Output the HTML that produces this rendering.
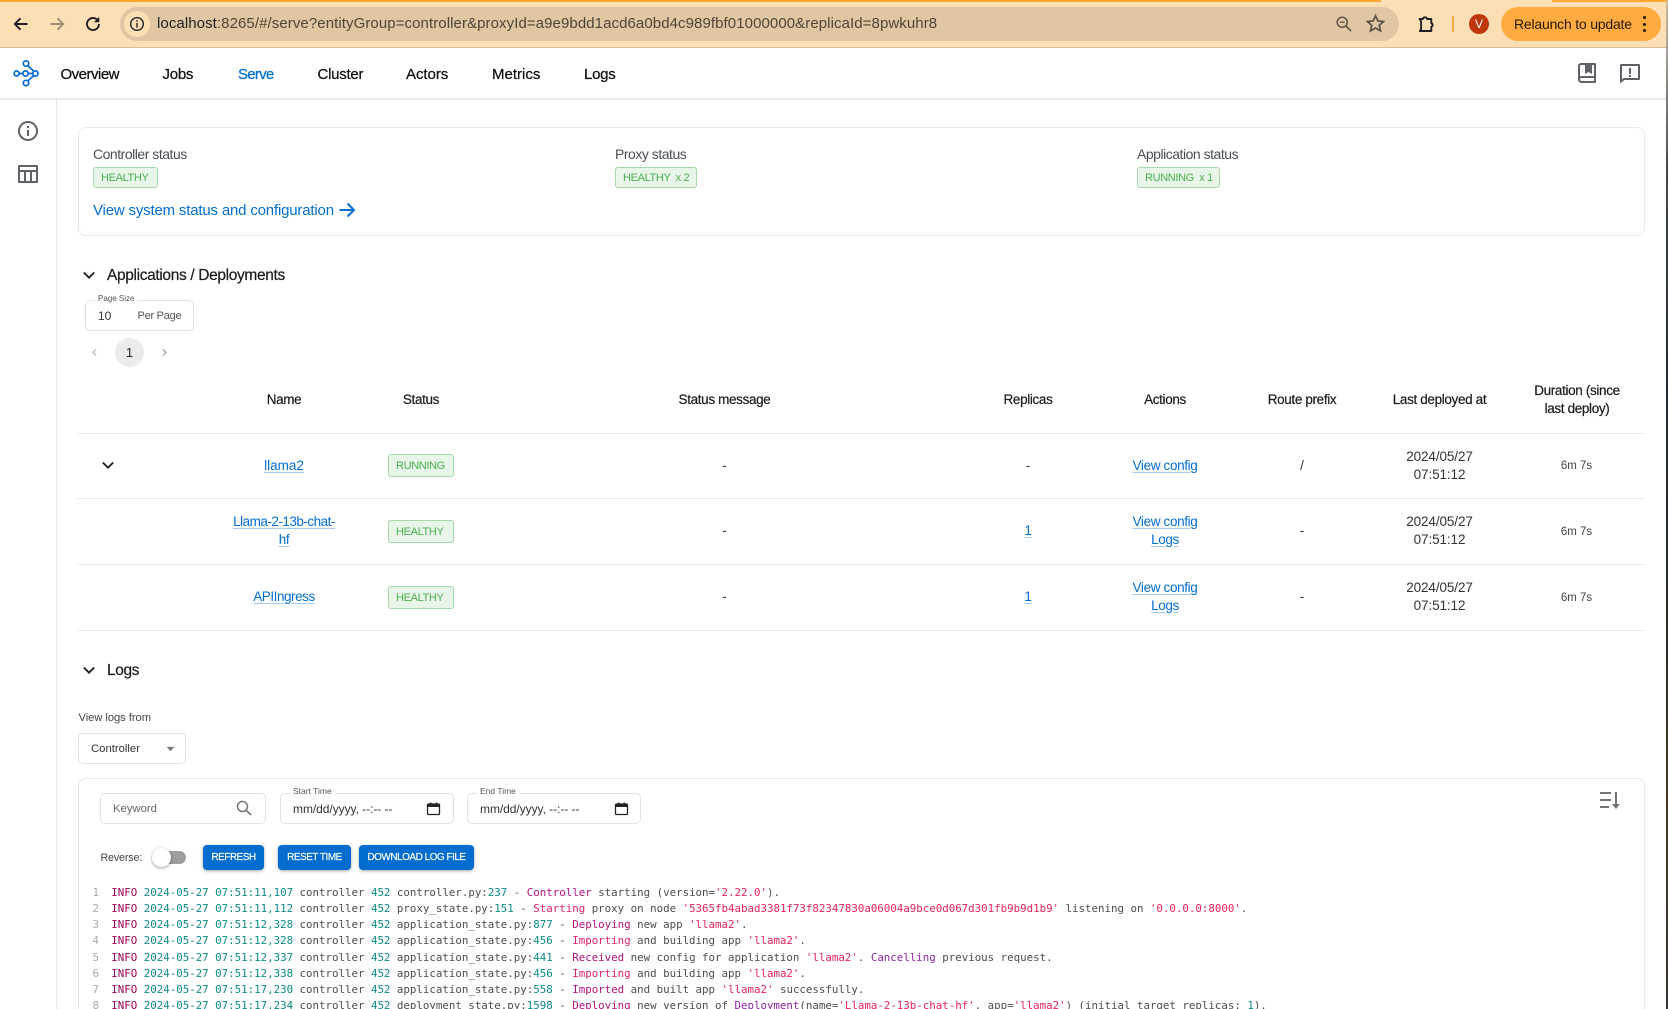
<!DOCTYPE html>
<html lang="en">
<head>
<meta charset="utf-8">
<title>Ray Dashboard - Serve</title>
<style>
html,body{margin:0;padding:0;background:#fff}
#r{position:relative;width:1668px;height:1009px;overflow:hidden;background:#fff;font-family:"Liberation Sans",Arial,sans-serif;color:#1f2328}
.t{position:absolute;white-space:nowrap;line-height:20px;height:20px}
.c{transform:translateX(-50%);text-align:center}
.b{position:absolute;box-sizing:border-box}
svg{position:absolute;display:block}
.nav{font-size:15px;letter-spacing:-.25px;color:#111;top:64.5px;-webkit-text-stroke:.25px currentColor}
.lbl{font-size:14px;letter-spacing:-.48px;color:#4a4f55;top:144px}
.badge{position:absolute;box-sizing:border-box;background:#e8f5e9;border:1px solid #a6d8a9;border-radius:3px;color:#4caf50;font-size:11px;line-height:20px;padding-left:7px;white-space:pre;letter-spacing:-.35px}
.th{font-size:13.5px;letter-spacing:-.35px;color:#1a1a1a;-webkit-text-stroke:.2px currentColor}
.td{font-size:13.5px;color:#333;letter-spacing:-.1px}
.a{font-size:13.5px;color:#036dcf;letter-spacing:-.35px;text-decoration:underline;text-decoration-color:rgba(3,109,207,.35);text-underline-offset:2px}
.d{font-size:11.5px;color:#444;margin-top:.5px}
.line{position:absolute;left:78px;width:1567px;height:1px;background:#e8eaed}
.box{position:absolute;box-sizing:border-box;border:1px solid #dfe2e6;border-radius:5px;background:#fff}
.small{font-size:8px;color:#555;line-height:10px;height:10px;background:#fff;padding:0 3px}
.btn{position:absolute;top:845px;height:25px;background:#036dcf;border-radius:4px;color:#fff;font-size:10px;letter-spacing:-.5px;line-height:26px;text-align:center;white-space:nowrap;box-shadow:0 1px 3px rgba(0,0,0,.35);-webkit-text-stroke:.15px #fff}
#log{position:absolute;left:0;top:884.5px;font-family:"DejaVu Sans Mono",monospace;font-size:10.79px;line-height:16.25px;color:#4d4d4d}
#log div{position:relative;padding-left:111.3px;height:16.25px;white-space:pre}
#log i{position:absolute;left:80px;width:19px;text-align:right;font-style:normal;color:#aaa}
.k{color:#990055}.n{color:#0b8a86}.m{color:#b3127f}.p{color:#e0226e}.s{color:#e6235a}.u{color:#8e24aa}
.hd{font-size:15.5px;letter-spacing:-.35px;color:#1a1a1a;-webkit-text-stroke:.2px currentColor}
.date{font-size:12px;letter-spacing:-.05px;color:#333;top:799px}
.lg{font-size:8.5px;color:#555;line-height:10px;height:10px;background:#fff;padding:0 3px;position:absolute;white-space:nowrap;top:786px}
</style>
</head>
<body>
<div id="r">

<!-- browser chrome -->
<div class="b" style="left:0;top:0;width:1668px;height:48px;background:#fddfb6;border-bottom:1px solid #d9bd98"></div>
<div class="b" style="left:0;top:0;width:1381px;height:1.5px;background:#ffa733"></div>
<div class="b" style="left:1552px;top:0;width:116px;height:1.5px;background:#ffa733"></div>

<svg style="left:11px;top:14px" width="20" height="20" viewBox="0 0 20 20"><path d="M16.5 10H4M9.5 4.3 3.8 10l5.7 5.7" fill="none" stroke="#202124" stroke-width="1.9"/></svg>
<svg style="left:47px;top:14px" width="20" height="20" viewBox="0 0 20 20"><path d="M3.5 10H16M10.5 4.3 16.2 10l-5.7 5.7" fill="none" stroke="#9a8c78" stroke-width="1.9"/></svg>
<svg style="left:83px;top:14px" width="20" height="20" viewBox="0 0 20 20"><path d="M15.3 7.2A6 6 0 1 0 16 10" fill="none" stroke="#202124" stroke-width="1.9"/><path d="M16.3 2.8v5.4h-5.4z" fill="#202124"/></svg>

<div class="b" style="left:120px;top:7px;width:1279px;height:34px;border-radius:17px;background:#e0c6a3"></div>
<div class="b" style="left:124px;top:11px;width:26px;height:26px;border-radius:13px;background:#fddfb6"></div>
<svg style="left:129px;top:16px" width="16" height="16" viewBox="0 0 16 16"><circle cx="8" cy="8" r="6.3" fill="none" stroke="#202124" stroke-width="1.4"/><path d="M7.3 4.2h1.4v1.500H7.3zM7.3 7h1.4v4.8H7.3z" fill="#202124"/></svg>
<div class="t" style="left:157px;top:14px;font-size:15px;letter-spacing:.08px;color:#4f4636"><span style="color:#1f1f1f">localhost</span>:8265/#/serve?entityGroup=controller&amp;proxyId=a9e9bdd1acd6a0bd4c989fbf01000000&amp;replicaId=8pwkuhr8</div>

<svg style="left:1335px;top:15px" width="18" height="18" viewBox="0 0 18 18"><circle cx="7.2" cy="7.2" r="5" fill="none" stroke="#5b5346" stroke-width="1.5"/><path d="M11 11l5 5" stroke="#5b5346" stroke-width="1.6"/><path d="M4.800 7.200h4.800" stroke="#5b5346" stroke-width="1.3"/></svg>
<svg style="left:1365px;top:13px" width="21" height="21" viewBox="0 0 24 24"><path d="M12 3.2l2.7 5.9 6.4.7-4.8 4.3 1.4 6.3L12 17.100l-5.700 3.300 1.400-6.300-4.800-4.300 6.400-.7z" fill="none" stroke="#5b5346" stroke-width="2"/></svg>
<svg style="left:1416px;top:14px" width="20" height="20" viewBox="0 0 20 20"><path d="M3.600 5h3.200a2.200 2.200 0 0 1 4.300 0h4.200v4.200a1.900 1.900 0 0 1 0 3.600V17H3.900l1.200-2.100V7.500z" fill="none" stroke="#202124" stroke-width="1.9" stroke-linejoin="round"/></svg>
<div class="b" style="left:1452px;top:16px;width:2px;height:16px;background:#ffab40"></div>
<div class="b" style="left:1469px;top:14px;width:20px;height:20px;border-radius:10px;background:#bf360c"></div>
<div class="t c" style="left:1479px;top:14px;font-size:12px;color:#fff">V</div>
<div class="b" style="left:1501px;top:7px;width:160px;height:34px;border-radius:17px;background:#ffab40"></div>
<div class="t" style="left:1514px;top:14px;font-size:14px;letter-spacing:-.2px;color:#241a0a">Relaunch to update</div>
<div class="b" style="left:1643px;top:16px;width:3.400px;height:3.400px;border-radius:2px;background:#241a0a"></div>
<div class="b" style="left:1643px;top:22.500px;width:3.400px;height:3.400px;border-radius:2px;background:#241a0a"></div>
<div class="b" style="left:1643px;top:29px;width:3.400px;height:3.400px;border-radius:2px;background:#241a0a"></div>

<!-- right window edge -->
<div class="b" style="left:1666px;top:0;width:2px;height:1009px;background:linear-gradient(#cdbb9c 0,#9b9b98 60px,#4a4a4a 170px,#1b2733 400px,#2a2b24 640px,#4a3a20 800px,#333 1009px)"></div>

<!-- app nav -->
<div class="b" style="left:0;top:98px;width:1666px;height:2px;background:#e4e8ed"></div>
<svg style="left:12px;top:58px" width="28" height="30" viewBox="0 0 28 30"><g fill="none" stroke="#036dcf" stroke-width="1.7"><circle cx="14" cy="5.500" r="2.700"/><circle cx="4.600" cy="15.500" r="2.500"/><circle cx="13.500" cy="15.500" r="2.600"/><circle cx="23.400" cy="15.500" r="2.600"/><circle cx="14" cy="25" r="2.700"/><path d="M7 15.500h4M16.100 15.500h4.700M15.700 7.700l6.200 5.600M15.700 23l6.200-5.500"/></g></svg>

<div class="t nav" style="left:60.500px;letter-spacing:-.5px">Overview</div>
<div class="t nav" style="left:162.500px">Jobs</div>
<div class="t nav" style="left:238px;color:#036dcf;letter-spacing:-.75px">Serve</div>
<div class="t nav" style="left:317.500px">Cluster</div>
<div class="t nav" style="left:406px;letter-spacing:-.05px">Actors</div>
<div class="t nav" style="left:492px;letter-spacing:0">Metrics</div>
<div class="t nav" style="left:584px">Logs</div>

<svg style="left:1575px;top:61px" width="24" height="24" viewBox="0 0 24 24"><path fill="#5f6369" d="M20 22H6.500C4.567 22 3 20.433 3 18.500V5C3 3.343 4.343 2 6 2H20C20.552 2 21 2.448 21 3V21C21 21.552 20.552 22 20 22ZM19 20V17H6.500C5.672 17 5 17.672 5 18.500C5 19.328 5.672 20 6.500 20H19ZM10 4H6C5.448 4 5 4.448 5 5V15.337C5.455 15.121 5.963 15 6.500 15H19V4H17V13L13.500 11L10 13V4Z"/></svg>
<svg style="left:1618px;top:61px" width="24" height="24" viewBox="0 0 24 24"><path fill="#5f6369" d="M6.455 19L2 22.500V4C2 3.448 2.448 3 3 3H21C21.552 3 22 3.448 22 4V18C22 18.552 21.552 19 21 19H6.455ZM5.763 17H20V5H4V18.385L5.763 17ZM11 14H13V16H11V14ZM11 7H13V13H11V7Z"/></svg>

<!-- sidebar -->
<div class="b" style="left:56px;top:100px;width:1px;height:909px;background:#e4e8ed"></div>
<svg style="left:16px;top:119px" width="24" height="24" viewBox="0 0 24 24"><path fill="#5f6369" d="M12 22C6.477 22 2 17.523 2 12C2 6.477 6.477 2 12 2C17.523 2 22 6.477 22 12C22 17.523 17.523 22 12 22ZM12 20C16.418 20 20 16.418 20 12C20 7.582 16.418 4 12 4C7.582 4 4 7.582 4 12C4 16.418 7.582 20 12 20ZM11 7H13V9H11V7ZM11 11H13V17H11V11Z"/></svg>
<svg style="left:16px;top:162px" width="24" height="24" viewBox="0 0 24 24"><path fill="#5f6369" fill-rule="evenodd" d="M4 8H20V5H4V8ZM14 19V10H10V19H14ZM16 19H20V10H16V19ZM8 19V10H4V19H8ZM3 3H21C21.552 3 22 3.448 22 4V20C22 20.552 21.552 21 21 21H3C2.448 21 2 20.552 2 20V4C2 3.448 2.448 3 3 3Z"/></svg>

<!-- status card -->
<div class="b" style="left:78px;top:127px;width:1567px;height:109px;border:1px solid #e6e9ed;border-radius:8px"></div>
<div class="t lbl" style="left:93px">Controller status</div>
<div class="badge" style="left:93px;top:167px;width:65px;height:21px">HEALTHY</div>
<div class="t lbl" style="left:615px">Proxy status</div>
<div class="badge" style="left:615px;top:167px;width:82px;height:21px">HEALTHY  x 2</div>
<div class="t lbl" style="left:1137px">Application status</div>
<div class="badge" style="left:1137px;top:167px;width:83px;height:21px">RUNNING  x 1</div>
<div class="t" style="left:93px;top:200.500px;font-size:15px;letter-spacing:-.18px;color:#036dcf">View system status and configuration</div>
<svg style="left:337px;top:200px" width="20" height="20" viewBox="0 0 20 20"><path d="M2.500 10H16.500M10.500 3.500l6.500 6.500-6.500 6.500" fill="none" stroke="#036dcf" stroke-width="2"/></svg>

<!-- applications section -->
<svg style="left:80px;top:266px" width="18" height="18" viewBox="0 0 18 18"><path d="M3.800 6.500 9 11.700l5.200-5.200" fill="none" stroke="#222" stroke-width="1.900"/></svg>
<div class="t hd" style="left:107px;top:265.500px">Applications / Deployments</div>

<div class="box" style="left:85px;top:300px;width:109px;height:31px"></div>
<div class="t small" style="left:95px;top:293.500px">Page Size</div>
<div class="t" style="left:98px;top:305.500px;font-size:12px;color:#333">10</div>
<div class="t" style="left:137.500px;top:305.500px;font-size:11px;letter-spacing:-.25px;color:#555">Per Page</div>

<svg style="left:89px;top:347px" width="11" height="11" viewBox="0 0 12 12"><path d="M7.800 2.500 4.300 6l3.500 3.500" fill="none" stroke="#b5b5b5" stroke-width="1.200"/></svg>
<div class="b" style="left:115px;top:338px;width:29px;height:29px;border-radius:50%;background:#ebebeb"></div>
<div class="t c" style="left:129.500px;top:342.500px;font-size:13px;color:#222">1</div>
<svg style="left:158.500px;top:347px" width="11" height="11" viewBox="0 0 12 12"><path d="M4.200 2.500 7.700 6 4.200 9.500" fill="none" stroke="#999" stroke-width="1.200"/></svg>

<!-- table -->
<div class="t c th" style="left:284px;top:390px">Name</div>
<div class="t c th" style="left:421px;top:390px">Status</div>
<div class="t c th" style="left:724.500px;top:390px">Status message</div>
<div class="t c th" style="left:1028px;top:390px">Replicas</div>
<div class="t c th" style="left:1165px;top:390px">Actions</div>
<div class="t c th" style="left:1302px;top:390px">Route prefix</div>
<div class="t c th" style="left:1439.500px;top:390px">Last deployed at</div>
<div class="t c th" style="left:1577px;top:381px">Duration (since</div>
<div class="t c th" style="left:1577px;top:399px">last deploy)</div>

<div class="line" style="top:433px"></div>
<div class="line" style="top:498px"></div>
<div class="line" style="top:564px"></div>
<div class="line" style="top:630px"></div>

<!-- row 1 -->
<svg style="left:99px;top:456px" width="18" height="18" viewBox="0 0 18 18"><path d="M3.800 6.500 9 11.700l5.200-5.200" fill="none" stroke="#222" stroke-width="1.900"/></svg>
<div class="t c a" style="left:284px;top:455.500px;letter-spacing:0">llama2</div>
<div class="badge" style="left:388px;top:454px;width:66px;height:23px;line-height:22px">RUNNING</div>
<div class="t c td" style="left:724.500px;top:455.500px">-</div>
<div class="t c td" style="left:1028px;top:455.500px">-</div>
<div class="t c a" style="left:1165px;top:456px">View config</div>
<div class="t c td" style="left:1302px;top:455.500px">/</div>
<div class="t c td" style="left:1439.500px;top:447px">2024/05/27</div>
<div class="t c td" style="left:1439.500px;top:465px">07:51:12</div>
<div class="t c d" style="left:1576.500px;top:455px">6m 7s</div>

<!-- row 2 -->
<div class="t c a" style="left:284px;top:512px;letter-spacing:-.5px">Llama-2-13b-chat-</div>
<div class="t c a" style="left:284px;top:530px">hf</div>
<div class="badge" style="left:388px;top:520px;width:66px;height:23px;line-height:22px">HEALTHY</div>
<div class="t c td" style="left:724.500px;top:521px">-</div>
<div class="t c a" style="left:1028px;top:521px">1</div>
<div class="t c a" style="left:1165px;top:512px">View config</div>
<div class="t c a" style="left:1165px;top:530px">Logs</div>
<div class="t c td" style="left:1302px;top:521px">-</div>
<div class="t c td" style="left:1439.500px;top:512px">2024/05/27</div>
<div class="t c td" style="left:1439.500px;top:530px">07:51:12</div>
<div class="t c d" style="left:1576.500px;top:521px">6m 7s</div>

<!-- row 3 -->
<div class="t c a" style="left:284px;top:587px;letter-spacing:-.45px">APIIngress</div>
<div class="badge" style="left:388px;top:586px;width:66px;height:23px;line-height:22px">HEALTHY</div>
<div class="t c td" style="left:724.500px;top:587px">-</div>
<div class="t c a" style="left:1028px;top:587px">1</div>
<div class="t c a" style="left:1165px;top:578px">View config</div>
<div class="t c a" style="left:1165px;top:596px">Logs</div>
<div class="t c td" style="left:1302px;top:587px">-</div>
<div class="t c td" style="left:1439.500px;top:578px">2024/05/27</div>
<div class="t c td" style="left:1439.500px;top:596px">07:51:12</div>
<div class="t c d" style="left:1576.500px;top:587px">6m 7s</div>

<!-- logs section -->
<svg style="left:80px;top:661px" width="18" height="18" viewBox="0 0 18 18"><path d="M3.800 6.500 9 11.700l5.200-5.200" fill="none" stroke="#222" stroke-width="1.900"/></svg>
<div class="t hd" style="left:107px;top:660.500px">Logs</div>
<div class="t" style="left:78.500px;top:708px;font-size:11.200px;letter-spacing:-.05px;color:#444">View logs from</div>

<div class="box" style="left:78px;top:733px;width:108px;height:31px"></div>
<div class="t" style="left:91px;top:738.500px;font-size:11.300px;color:#333">Controller</div>
<svg style="left:165px;top:745.500px" width="11" height="6" viewBox="0 0 12 7"><path d="M1.500 1h9L6 6z" fill="#757575"/></svg>

<div class="b" style="left:78px;top:778px;width:1567px;height:260px;border:1px solid #e6e9ed;border-radius:8px"></div>

<div class="box" style="left:100px;top:793px;width:166px;height:31px"></div>
<div class="t" style="left:113px;top:799px;font-size:11.300px;color:#666">Keyword</div>
<svg style="left:234px;top:798px" width="20" height="20" viewBox="0 0 20 20"><circle cx="8.500" cy="8.500" r="5" fill="none" stroke="#777" stroke-width="1.500"/><path d="M12.300 12.300 17 17" stroke="#777" stroke-width="1.700"/></svg>

<div class="box" style="left:280px;top:793px;width:173.500px;height:31px"></div>
<div class="lg" style="left:290px">Start Time</div>
<div class="t date" style="left:293px">mm/dd/yyyy, --:-- --</div>
<svg style="left:426px;top:801px" width="15" height="15" viewBox="0 0 15 15"><path d="M2.500 3h10a1 1 0 0 1 1 1v8.500a1 1 0 0 1-1 1h-10a1 1 0 0 1-1-1V4a1 1 0 0 1 1-1z" fill="none" stroke="#222" stroke-width="1.300"/><path d="M1.500 3h12v3h-12zM4 1.500h1.300V3H4zM9.700 1.500H11V3H9.700z" fill="#222"/></svg>

<div class="box" style="left:467px;top:793px;width:173.500px;height:31px"></div>
<div class="lg" style="left:477px">End Time</div>
<div class="t date" style="left:480px">mm/dd/yyyy, --:-- --</div>
<svg style="left:613.500px;top:801px" width="15" height="15" viewBox="0 0 15 15"><path d="M2.500 3h10a1 1 0 0 1 1 1v8.500a1 1 0 0 1-1 1h-10a1 1 0 0 1-1-1V4a1 1 0 0 1 1-1z" fill="none" stroke="#222" stroke-width="1.300"/><path d="M1.500 3h12v3h-12zM4 1.500h1.300V3H4zM9.700 1.500H11V3H9.700z" fill="#222"/></svg>

<svg style="left:1597px;top:788px" width="24" height="24" viewBox="0 0 24 24"><path fill="#757575" d="M20 4V16H23L19 21L15 16H18V4H20ZM12 18V20H3V18H12ZM14 11V13H3V11H14ZM14 4V6H3V4H14Z"/></svg>

<div class="t" style="left:100.500px;top:848px;font-size:10.700px;letter-spacing:-.15px;color:#444">Reverse:</div>
<div class="b" style="left:158px;top:851px;width:28px;height:13px;border-radius:7px;background:#9e9e9e"></div>
<div class="b" style="left:151.500px;top:848px;width:19px;height:19px;border-radius:50%;background:#fff;box-shadow:0 1px 3px rgba(0,0,0,.4)"></div>

<div class="btn" style="left:203px;width:61px">REFRESH</div>
<div class="btn" style="left:278px;width:73px">RESET TIME</div>
<div class="btn" style="left:359px;width:115px">DOWNLOAD LOG FILE</div>

<!-- log output -->
<div id="log">
<div><i>1</i><span class="k">INFO</span> <span class="n">2024-05-27 07:51:11,107</span> controller <span class="n">452</span> controller.py:<span class="n">237</span> - <span class="m">Controller</span> starting (version=<span class="s">'2.22.0'</span>).</div>
<div><i>2</i><span class="k">INFO</span> <span class="n">2024-05-27 07:51:11,112</span> controller <span class="n">452</span> proxy_state.py:<span class="n">151</span> - <span class="p">Starting</span> proxy on node <span class="s">'5365fb4abad3381f73f82347830a06004a9bce0d067d301fb9b9d1b9'</span> listening on <span class="s">'0.0.0.0:8000'</span>.</div>
<div><i>3</i><span class="k">INFO</span> <span class="n">2024-05-27 07:51:12,328</span> controller <span class="n">452</span> application_state.py:<span class="n">877</span> - <span class="m">Deploying</span> new app <span class="s">'llama2'</span>.</div>
<div><i>4</i><span class="k">INFO</span> <span class="n">2024-05-27 07:51:12,328</span> controller <span class="n">452</span> application_state.py:<span class="n">456</span> - <span class="p">Importing</span> and building app <span class="s">'llama2'</span>.</div>
<div><i>5</i><span class="k">INFO</span> <span class="n">2024-05-27 07:51:12,337</span> controller <span class="n">452</span> application_state.py:<span class="n">441</span> - <span class="m">Received</span> new config for application <span class="s">'llama2'</span>. <span class="u">Cancelling</span> previous request.</div>
<div><i>6</i><span class="k">INFO</span> <span class="n">2024-05-27 07:51:12,338</span> controller <span class="n">452</span> application_state.py:<span class="n">456</span> - <span class="p">Importing</span> and building app <span class="s">'llama2'</span>.</div>
<div><i>7</i><span class="k">INFO</span> <span class="n">2024-05-27 07:51:17,230</span> controller <span class="n">452</span> application_state.py:<span class="n">558</span> - <span class="m">Imported</span> and built app <span class="s">'llama2'</span> successfully.</div>
<div><i>8</i><span class="k">INFO</span> <span class="n">2024-05-27 07:51:17,234</span> controller <span class="n">452</span> deployment_state.py:<span class="n">1598</span> - <span class="m">Deploying</span> new version of <span class="u">Deployment</span>(name=<span class="s">'Llama-2-13b-chat-hf'</span>, app=<span class="s">'llama2'</span>) (initial target replicas: <span class="n">1</span>).</div>
</div>

</div>
</body>
</html>
